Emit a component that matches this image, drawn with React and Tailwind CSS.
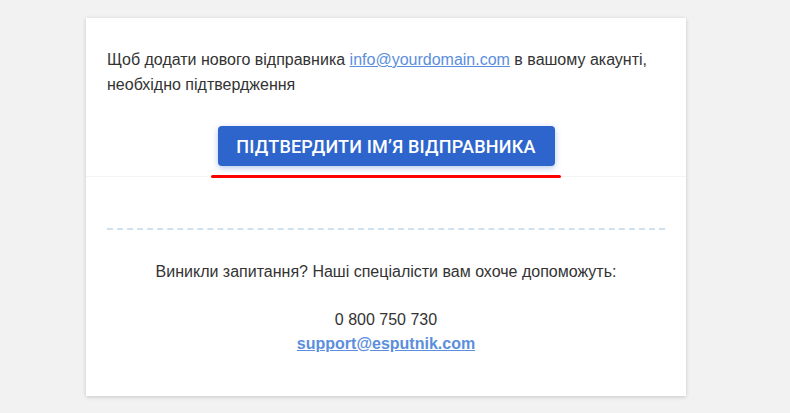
import React from "react";

const App = () => {
  return (
    <div className="min-h-screen bg-[#f2f2f2] flex pl-[86px] pt-[18px] font-['Liberation_Sans',Arial,sans-serif]">
      <div className="w-[600px] h-[378px] bg-white shadow-[0_1px_4px_rgba(0,0,0,0.18)] flex flex-col">
        <div className="px-[21px] pt-[29px] text-[16px] leading-[25px] text-[#333]">
          Щоб додати нового відправника{" "}
          <a href="#" className="text-[#5b8edd] underline">
            info@yourdomain.com
          </a>{" "}
          в вашому акаунті, необхідно підтвердження
        </div>

        <div className="flex flex-col items-center pt-[29px]">
          <button className="w-[337px] h-[40px] rounded-[4px] bg-[#2d65cc] text-white text-[18px] font-medium tracking-[0.2px] font-['Roboto',sans-serif] shadow-[0_2px_6px_rgba(45,101,204,0.35)]">
            ПІДТВЕРДИТИ ІМ’Я ВІДПРАВНИКА
          </button>
          <div className="w-full h-px bg-[#f4f4f4] mt-[10px]" />
          <div className="w-[350px] h-[3px] rounded-full bg-[#ff0000] -mt-[2px]" />
        </div>

        <div className="px-[21px] pt-[50px]">
          <div className="border-t-2 border-dashed border-[#cfe0ef]" />
        </div>

        <div className="flex flex-col items-center text-[16px] text-[#333] pt-[29px]">
          <p className="leading-[25px]">
            Виникли запитання? Наші спеціалісти вам охоче допоможуть:
          </p>
          <p className="leading-[25px] mt-[23px]">0 800 750 730</p>
          <a href="#" className="leading-[24px] font-bold text-[#5b8edd] underline">
            support@esputnik.com
          </a>
        </div>
      </div>
    </div>
  );
};

export default App;
